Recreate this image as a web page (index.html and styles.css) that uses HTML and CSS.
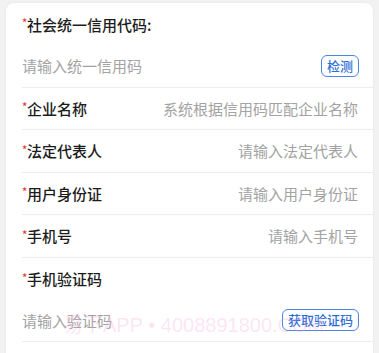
FILE: index.html
```html
<!DOCTYPE html>
<html lang="zh-CN">
<head>
<meta charset="utf-8">
<link rel="stylesheet" href="styles.css">
</head>
<body>
<div class="card">
  <div class="row label-row">
    <span class="label"><span class="req">*</span>社会统一信用代码:</span>
  </div>
  <div class="row line">
    <span class="ph grow">请输入统一信用码</span>
    <span class="btn">检测</span>
  </div>
  <div class="row line">
    <span class="label"><span class="req">*</span>企业名称</span>
    <span class="ph right">系统根据信用码匹配企业名称</span>
  </div>
  <div class="row line">
    <span class="label"><span class="req">*</span>法定代表人</span>
    <span class="ph right">请输入法定代表人</span>
  </div>
  <div class="row line">
    <span class="label"><span class="req">*</span>用户身份证</span>
    <span class="ph right">请输入用户身份证</span>
  </div>
  <div class="row line">
    <span class="label"><span class="req">*</span>手机号</span>
    <span class="ph right">请输入手机号</span>
  </div>
  <div class="row label-row">
    <span class="label"><span class="req">*</span>手机验证码</span>
  </div>
  <div class="row line">
    <span class="ph grow">请输入验证码</span>
    <span class="btn">获取验证码</span>
  </div>
  <div class="watermark">易下APP • 4008891800.COM</div>
</div>
</body>
</html>
```

FILE: styles.css
```css
html, body {
  margin: 0;
  padding: 0;
}
body {
  background: #f2f2f2;
  font-family: "Noto Sans CJK SC", "Noto Sans", sans-serif;
  padding: 3px 6px 0 6px;
  height: 353px;
  box-sizing: border-box;
  overflow: hidden;
}
.card {
  position: relative;
  background: #ffffff;
  border-radius: 8px;
  box-shadow: 0 0 3px rgba(0, 0, 0, 0.06);
  padding-left: 16px;
  height: 400px;
}
.row {
  display: flex;
  align-items: center;
  padding-right: 15px;
  box-sizing: border-box;
}
.label-row {
  height: 42px;
}
.line {
  height: 42.5px;
  border-bottom: 1px solid #ececec;
}
.label {
  font-size: 15px;
  color: #1c1c1c;
  font-weight: 500;
  white-space: nowrap;
  display: flex;
  align-items: center;
}
.req {
  color: #e8343a;
  font-size: 11px;
  position: relative;
  top: -2px;
  width: 5px;
}
.ph {
  font-size: 15px;
  color: #a3a3a3;
  white-space: nowrap;
}
.grow {
  flex: 1;
}
.right {
  margin-left: auto;
}
.btn {
  font-size: 13px;
  color: #2f6fd8;
  border: 1px solid #4a85e3;
  border-radius: 6px;
  padding: 0 5px;
  margin-right: -1px;
  height: 22px;
  line-height: 20px;
  box-sizing: border-box;
  font-weight: 500;
}
.watermark {
  position: absolute;
  left: 57px;
  top: 306px;
  font-family: "Liberation Sans", "Noto Sans CJK SC", sans-serif;
  font-size: 20px;
  color: rgba(245, 160, 215, 0.28);
  white-space: nowrap;
  pointer-events: none;
}
```
